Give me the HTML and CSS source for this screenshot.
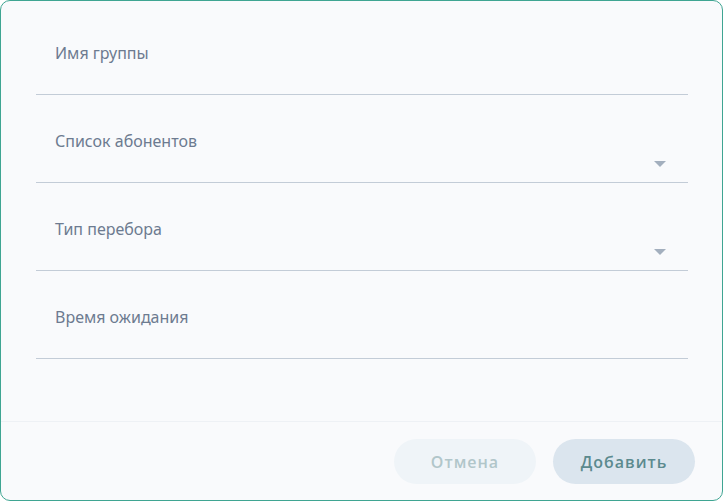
FILE: index.html
```html
<!DOCTYPE html>
<html lang="ru">
<head>
    <meta charset="UTF-8">
    <title>Добавить группу</title>
    <link rel="stylesheet" href="styles.css">
</head>
<body>
    <div class="dialog">
        <form class="dialog-form">
            <div class="field">
                <label class="field-label">Имя группы</label>
            </div>
            <div class="field">
                <label class="field-label">Список абонентов</label>
                <span class="arrow"></span>
            </div>
            <div class="field">
                <label class="field-label">Тип перебора</label>
                <span class="arrow"></span>
            </div>
            <div class="field">
                <label class="field-label">Время ожидания</label>
            </div>
        </form>
        <div class="dialog-footer">
            <button type="button" class="btn btn-cancel">Отмена</button>
            <button type="button" class="btn btn-add">Добавить</button>
        </div>
    </div>
</body>
</html>
```

FILE: styles.css
```css
* {
    margin: 0;
    padding: 0;
    box-sizing: border-box;
}

body {
    font-family: 'Noto Sans', sans-serif;
    background-color: #ffffff;
}

/* Dialog frame */
.dialog {
    width: 723px;
    height: 501px;
    border: 1px solid #3fa592;
    border-radius: 10px;
    background-color: #f9fafc;
    display: flex;
    flex-direction: column;
}

.dialog-form {
    flex: 1;
    padding: 6px 34px 0 35px;
}

/* Form fields */
.field {
    position: relative;
    height: 88px;
    padding-top: 36px;
    border-bottom: 1px solid #c3ccd7;
}

.field-label {
    display: block;
    padding-left: 19px;
    font-size: 16px;
    line-height: 20px;
    color: #6d7b90;
}

.arrow {
    position: absolute;
    right: 22px;
    top: 66px;
    width: 0;
    height: 0;
    border-left: 6px solid transparent;
    border-right: 6px solid transparent;
    border-top: 6px solid #a3afbe;
}

/* Footer with buttons */
.dialog-footer {
    display: flex;
    justify-content: flex-end;
    gap: 17px;
    padding: 17px 27px 16px;
    border-top: 1px solid #eef1f5;
}

.btn {
    width: 142px;
    height: 45px;
    border: none;
    border-radius: 23px;
    font-family: 'Open Sans', sans-serif;
    font-size: 16px;
    font-weight: 600;
    letter-spacing: 1px;
    cursor: pointer;
}

.btn-cancel {
    background-color: #eff4f8;
    color: #b1c6ca;
}

.btn-add {
    background-color: #dbe5ee;
    color: #5b8a8e;
}
```
